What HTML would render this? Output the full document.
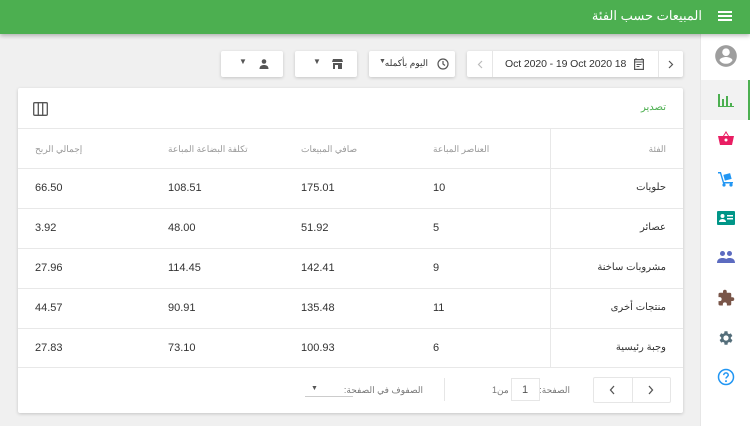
<!DOCTYPE html>
<html><head><meta charset="utf-8"><style>
*{margin:0;padding:0;box-sizing:border-box}
body{width:750px;height:426px;overflow:hidden;background:#f0f0f0;font-family:"Liberation Sans","Noto Sans CJK SC",sans-serif;position:relative;color:#333}
.a{position:absolute}
.hdr{left:0;top:0;width:750px;height:34px;background:#4caf50;box-shadow:0 2px 4px rgba(0,0,0,.25);z-index:2}
.box{background:#fff;box-shadow:0 1px 3px rgba(0,0,0,.18);border-radius:2px}
.t{font-size:11px;color:#333;white-space:nowrap}
.h{font-size:9px;color:#999;white-space:nowrap}
.r{direction:rtl}
.line{height:1px;background:#e8e8e8}
</style></head><body>
<div class="a hdr">
 <div class="a" style="right:18px;top:11px;width:14px;height:2px;background:#fff;box-shadow:0 4px 0 #fff,0 8px 0 #fff"></div>
 <div class="a r" style="right:48px;top:8px;color:#fff;font-size:13px">المبيعات حسب الفئة</div>
</div>
<div class="a" style="left:700px;top:34px;width:50px;height:392px;background:#fff;border-left:1px solid #e6e6e6"></div>
<div class="a" style="left:701px;top:80px;width:49px;height:40px;background:#f2f2f2;border-right:2px solid #4caf50"></div>
<svg class="a" style="left:713px;top:43px" width="26" height="26" viewBox="0 0 24 24"><path fill="#9e9e9e" d="M12 2a10 10 0 100 20 10 10 0 000-20zm0 3a3.5 3.5 0 110 7 3.5 3.5 0 010-7zm0 14.2a7.3 7.3 0 01-6-3.2c0-2 4-3.1 6-3.1s6 1.1 6 3.1a7.3 7.3 0 01-6 3.2z"/></svg>
<svg class="a" style="left:717px;top:92px" width="18" height="16" viewBox="0 0 18 16"><path fill="#4caf50" d="M1 2h2v13H1zm4 5h2v8H5zm4-3h2v11H9zm4 7h2v4h-2zM1 14h16v1H1z"/></svg>
<svg class="a" style="left:717px;top:130px" width="18" height="16" viewBox="0 0 18 16"><path fill="#e91e63" d="M6 6l3-5 3 5h5l-2 9H3L1 6zM7 6h4L9 3z"/><circle cx="9" cy="10" r="1.5" fill="#fff"/></svg>
<svg class="a" style="left:717px;top:170px" width="18" height="18" viewBox="0 0 18 18"><path fill="#2196f3" d="M1 2h3l3 10h9v1.5H6L3 3.5H1z"/><rect x="7" y="4" width="7" height="6" fill="#2196f3" transform="rotate(-15 10 7)"/><circle cx="7" cy="15" r="1.6" fill="#2196f3"/><circle cx="14" cy="15" r="1.6" fill="#2196f3"/></svg>
<svg class="a" style="left:717px;top:210px" width="18" height="16" viewBox="0 0 18 16"><rect x="0" y="1" width="18" height="14" rx="1" fill="#009688"/><circle cx="5.5" cy="6" r="2" fill="#fff"/><path fill="#fff" d="M2 12c0-2 2-3 3.5-3s3.5 1 3.5 3zM10 5h6v1.5h-6zm0 3h6v1.5h-6z"/></svg>
<svg class="a" style="left:716px;top:250px" width="20" height="14" viewBox="0 0 20 14"><circle cx="6.5" cy="3.5" r="2.5" fill="#5c6bc0"/><circle cx="13.5" cy="3.5" r="2.5" fill="#5c6bc0"/><path fill="#5c6bc0" d="M1 13c0-4 3-5 5.5-5S12 9 12 13zm8 0c0-4 2-5 4.5-5S19 9 19 13z"/></svg>
<svg class="a" style="left:717px;top:289px" width="18" height="18" viewBox="0 0 24 24"><path fill="#795548" d="M20.5 11H19V7a2 2 0 00-2-2h-4V3.5a2.5 2.5 0 00-5 0V5H4a2 2 0 00-2 2v3.8h1.5a2.7 2.7 0 010 5.4H2V20a2 2 0 002 2h3.8v-1.5a2.7 2.7 0 015.4 0V22H17a2 2 0 002-2v-4h1.5a2.5 2.5 0 000-5z"/></svg>
<svg class="a" style="left:717px;top:329px" width="18" height="18" viewBox="0 0 24 24"><path fill="#546e7a" d="M19.4 13a7.5 7.5 0 000-2l2.1-1.6-2-3.5-2.5 1a7 7 0 00-1.7-1L15 3h-4l-.4 2.7a7 7 0 00-1.7 1l-2.5-1-2 3.5L6.6 11a7.5 7.5 0 000 2l-2.1 1.6 2 3.5 2.5-1a7 7 0 001.7 1L11 21h4l.4-2.7a7 7 0 001.7-1l2.5 1 2-3.5zM13 15.5a3.5 3.5 0 110-7 3.5 3.5 0 010 7z" transform="translate(-1 0)"/></svg>
<svg class="a" style="left:717px;top:368px" width="18" height="18" viewBox="0 0 24 24"><circle cx="12" cy="12" r="10" fill="none" stroke="#2196f3" stroke-width="2"/><path d="M9 9.5a3 3 0 116 0c0 2-3 2.5-3 4.5" fill="none" stroke="#2196f3" stroke-width="2"/><circle cx="12" cy="17.5" r="1.3" fill="#2196f3"/></svg>
<div class="a box" style="left:221px;top:51px;width:62px;height:26px"></div>
<div class="a t" style="left:239px;top:57px;font-size:8px;color:#555">▼</div>
<svg class="a" style="left:258px;top:58px" width="12" height="12" viewBox="0 0 12 12"><circle cx="6" cy="3.5" r="2.3" fill="#555"/><path d="M1.5 11c0-3 2-4 4.5-4s4.5 1 4.5 4z" fill="#555"/></svg>
<div class="a box" style="left:295px;top:51px;width:62px;height:26px"></div>
<div class="a t" style="left:313px;top:57px;font-size:8px;color:#555">▼</div>
<svg class="a" style="left:332px;top:59px" width="11" height="10" viewBox="0 0 11 10"><path fill="#555" d="M1 0h9l1 3H0zM1 4h9v6H1z"/><rect x="3" y="6" width="3" height="4" fill="#fff"/></svg>
<div class="a box" style="left:369px;top:51px;width:86px;height:26px"></div>
<div class="a t" style="left:379px;top:58px;font-size:7px;color:#555">▼</div>
<div class="a t r" style="right:322px;top:58px;font-size:9px">اليوم بأكمله</div>
<svg class="a" style="left:437px;top:58px" width="12" height="12" viewBox="0 0 12 12"><circle cx="6" cy="6" r="5" fill="none" stroke="#555" stroke-width="1.2"/><path d="M6 3v3l2 1.5" fill="none" stroke="#555" stroke-width="1.2"/></svg>
<div class="a box" style="left:467px;top:51px;width:216px;height:26px"></div>
<div class="a" style="left:492px;top:51px;width:1px;height:26px;background:#e6e6e6"></div>
<div class="a" style="left:658px;top:51px;width:1px;height:26px;background:#e6e6e6"></div>
<svg class="a" style="left:477px;top:60px" width="6" height="9" viewBox="0 0 6 9"><path d="M5 1L1.5 4.5 5 8" fill="none" stroke="#bbb" stroke-width="1.2"/></svg>
<svg class="a" style="left:668px;top:60px" width="6" height="9" viewBox="0 0 6 9"><path d="M1 1l3.5 3.5L1 8" fill="none" stroke="#555" stroke-width="1.2"/></svg>
<div class="a t" style="left:505px;top:58px;font-size:10.5px;letter-spacing:-0.1px">Oct 2020 - 19 Oct 2020 18</div>
<svg class="a" style="left:634px;top:58px" width="10" height="12" viewBox="0 0 10 12"><rect x="0.6" y="1.6" width="8.8" height="9.8" fill="none" stroke="#555" stroke-width="1.2"/><path d="M2 0v2M8 0v2M1 4h8M2.5 6.5h5M2.5 8.5h3" stroke="#555" stroke-width="1"/></svg>
<div class="a box" style="left:18px;top:88px;width:665px;height:325px"></div>
<svg class="a" style="left:33px;top:102px" width="15" height="14" viewBox="0 0 15 14"><rect x="0.7" y="0.7" width="13.6" height="12.6" rx="1" fill="none" stroke="#555" stroke-width="1.3"/><path d="M5.3 1v12M9.7 1v12" stroke="#555" stroke-width="1.3"/></svg>
<div class="a t r" style="right:84px;top:102px;color:#4caf50;font-size:10px">تصدير</div>
<div class="a line" style="left:18px;top:128px;width:665px"></div>
<div class="a line" style="left:18px;top:168px;width:665px"></div>
<div class="a line" style="left:18px;top:208px;width:665px"></div>
<div class="a line" style="left:18px;top:248px;width:665px"></div>
<div class="a line" style="left:18px;top:288px;width:665px"></div>
<div class="a line" style="left:18px;top:328px;width:665px"></div>
<div class="a line" style="left:18px;top:367px;width:665px"></div>
<div class="a" style="left:550px;top:128px;width:1px;height:239px;background:#e8e8e8"></div>
<div class="a h" style="left:35px;top:144px">إجمالي الربح</div>
<div class="a h" style="left:168px;top:144px">تكلفة البضاعة المباعة</div>
<div class="a h" style="left:301px;top:144px">صافي المبيعات</div>
<div class="a h" style="left:433px;top:144px">العناصر المباعة</div>
<div class="a h r" style="right:84px;top:144px">الفئة</div>
<div class="a t" style="left:35px;top:182px">66.50</div><div class="a t" style="left:168px;top:182px">108.51</div><div class="a t" style="left:301px;top:182px">175.01</div><div class="a t" style="left:433px;top:182px">10</div><div class="a t r" style="right:84px;top:182px;font-size:10px">حلويات</div>
<div class="a t" style="left:35px;top:222px">3.92</div><div class="a t" style="left:168px;top:222px">48.00</div><div class="a t" style="left:301px;top:222px">51.92</div><div class="a t" style="left:433px;top:222px">5</div><div class="a t r" style="right:84px;top:222px;font-size:10px">عصائر</div>
<div class="a t" style="left:35px;top:262px">27.96</div><div class="a t" style="left:168px;top:262px">114.45</div><div class="a t" style="left:301px;top:262px">142.41</div><div class="a t" style="left:433px;top:262px">9</div><div class="a t r" style="right:84px;top:262px;font-size:10px">مشروبات ساخنة</div>
<div class="a t" style="left:35px;top:302px">44.57</div><div class="a t" style="left:168px;top:302px">90.91</div><div class="a t" style="left:301px;top:302px">135.48</div><div class="a t" style="left:433px;top:302px">11</div><div class="a t r" style="right:84px;top:302px;font-size:10px">منتجات أخرى</div>
<div class="a t" style="left:35px;top:342px">27.83</div><div class="a t" style="left:168px;top:342px">73.10</div><div class="a t" style="left:301px;top:342px">100.93</div><div class="a t" style="left:433px;top:342px">6</div><div class="a t r" style="right:84px;top:342px;font-size:10px">وجبة رئيسية</div>
<div class="a" style="left:593px;top:377px;width:78px;height:26px;border:1px solid #e6e6e6;border-radius:2px"></div>
<div class="a" style="left:632px;top:377px;width:1px;height:26px;background:#e6e6e6"></div>
<svg class="a" style="left:609px;top:385px" width="6" height="10" viewBox="0 0 6 10"><path d="M5 1L1.5 5 5 9" fill="none" stroke="#555" stroke-width="1.3"/></svg>
<svg class="a" style="left:648px;top:385px" width="6" height="10" viewBox="0 0 6 10"><path d="M1 1l3.5 4L1 9" fill="none" stroke="#555" stroke-width="1.3"/></svg>
<div class="a h r" style="right:180px;top:385px;color:#777">الصفحة:</div>
<div class="a" style="left:511px;top:378px;width:29px;height:23px;border:1px solid #e6e6e6"></div>
<div class="a t" style="left:522px;top:384px;color:#555">1</div>
<div class="a h" style="left:492px;top:385px;color:#777">1من</div>
<div class="a" style="left:444px;top:378px;width:1px;height:23px;background:#e6e6e6"></div>
<div class="a h r" style="right:327px;top:385px;color:#777">الصفوف في الصفحة:</div>
<div class="a" style="left:305px;top:396px;width:48px;height:1px;background:#ccc"></div>
<div class="a t" style="left:311px;top:385px;font-size:7px;color:#555">▼</div>
</body></html>
